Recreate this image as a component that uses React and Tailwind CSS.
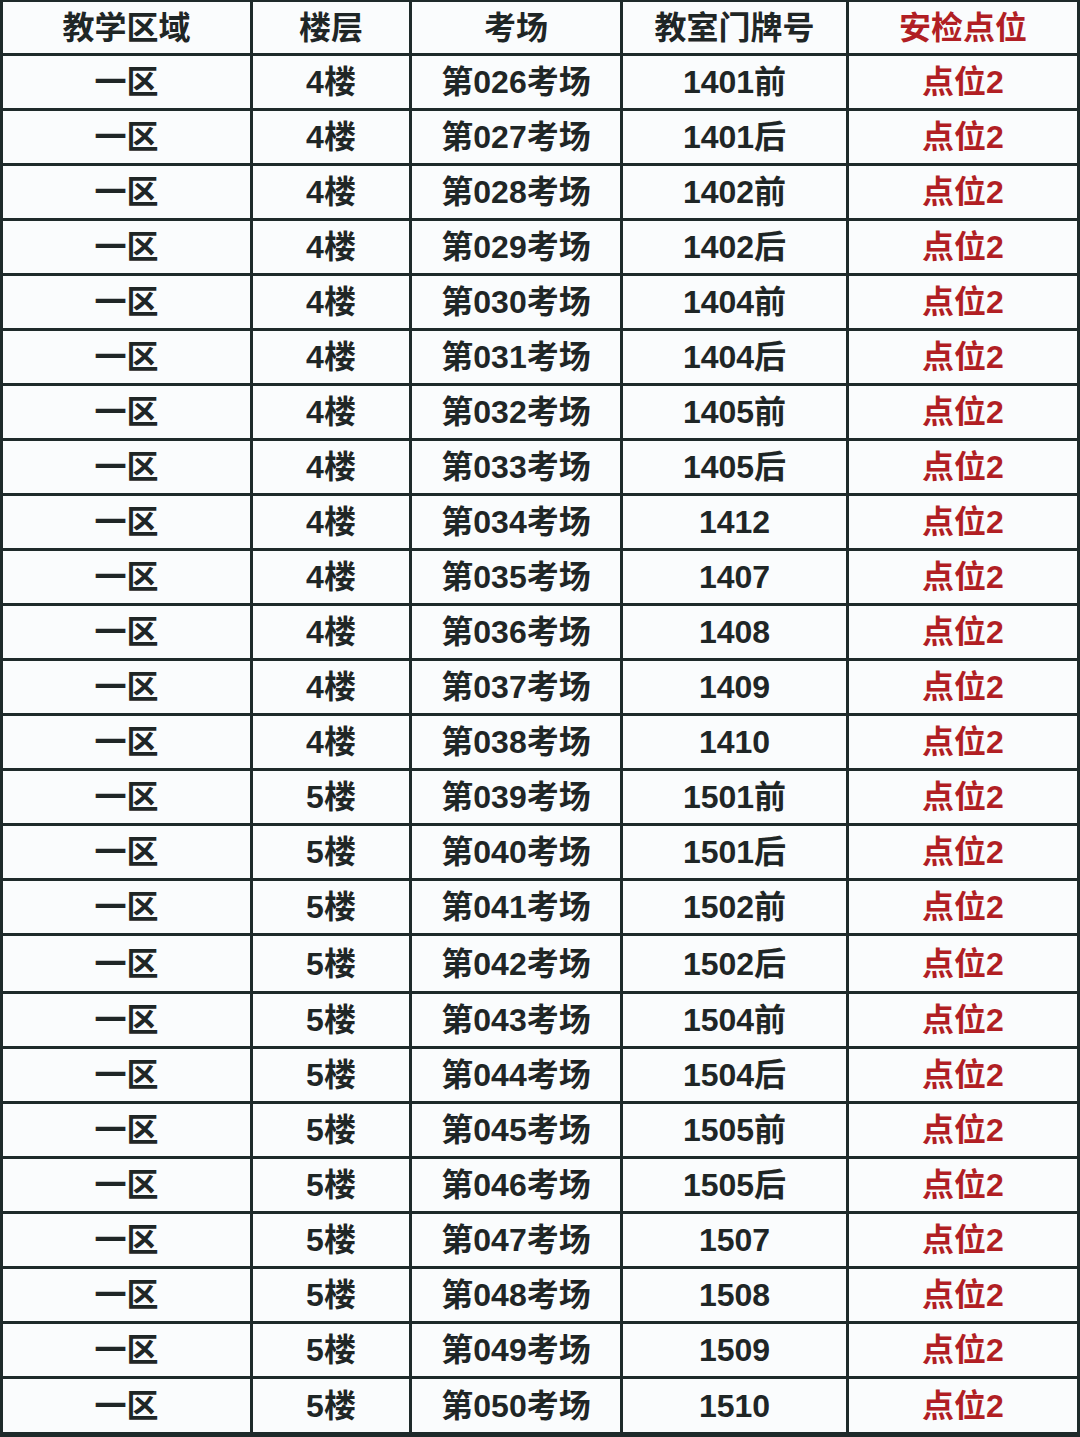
const rows = [
  ["4楼", "第026考场", "1401前"],
  ["4楼", "第027考场", "1401后"],
  ["4楼", "第028考场", "1402前"],
  ["4楼", "第029考场", "1402后"],
  ["4楼", "第030考场", "1404前"],
  ["4楼", "第031考场", "1404后"],
  ["4楼", "第032考场", "1405前"],
  ["4楼", "第033考场", "1405后"],
  ["4楼", "第034考场", "1412"],
  ["4楼", "第035考场", "1407"],
  ["4楼", "第036考场", "1408"],
  ["4楼", "第037考场", "1409"],
  ["4楼", "第038考场", "1410"],
  ["5楼", "第039考场", "1501前"],
  ["5楼", "第040考场", "1501后"],
  ["5楼", "第041考场", "1502前"],
  ["5楼", "第042考场", "1502后"],
  ["5楼", "第043考场", "1504前"],
  ["5楼", "第044考场", "1504后"],
  ["5楼", "第045考场", "1505前"],
  ["5楼", "第046考场", "1505后"],
  ["5楼", "第047考场", "1507"],
  ["5楼", "第048考场", "1508"],
  ["5楼", "第049考场", "1509"],
  ["5楼", "第050考场", "1510"],
];

const font = { fontFamily: '"Liberation Sans", "Noto Sans CJK SC", sans-serif' };

const Cell = ({ children, red }) => (
  <div
    className={`flex items-center justify-center bg-[#fafcfd] text-[32px] font-bold leading-none ${
      red ? "text-[#b11f24]" : "text-[#1f2626]"
    }`}
  >
    {children}
  </div>
);

const App = () => {
  return (
    <div
      className="flex flex-col gap-[3px] w-[1080px] h-[1437px] bg-[#1e2a2a] px-[3px] pt-[2px] pb-[3px]"
      style={font}
    >
      <div className="grid grid-cols-[247px_156px_208px_223px_228px] gap-[3px] h-[51px]">
        <Cell>教学区域</Cell>
        <Cell>楼层</Cell>
        <Cell>考场</Cell>
        <Cell>教室门牌号</Cell>
        <Cell red>安检点位</Cell>
      </div>
      {rows.map(([floor, room, door], i) => (
        <div
          key={room}
          className={`grid grid-cols-[247px_156px_208px_223px_228px] gap-[3px] ${
            i === 16 ? "h-[55px]" : i === 24 ? "h-[53px]" : "h-[52px]"
          }`}
        >
          <Cell>一区</Cell>
          <Cell>{floor}</Cell>
          <Cell>{room}</Cell>
          <Cell>{door}</Cell>
          <Cell red>点位2</Cell>
        </div>
      ))}
    </div>
  );
};

export default App;
